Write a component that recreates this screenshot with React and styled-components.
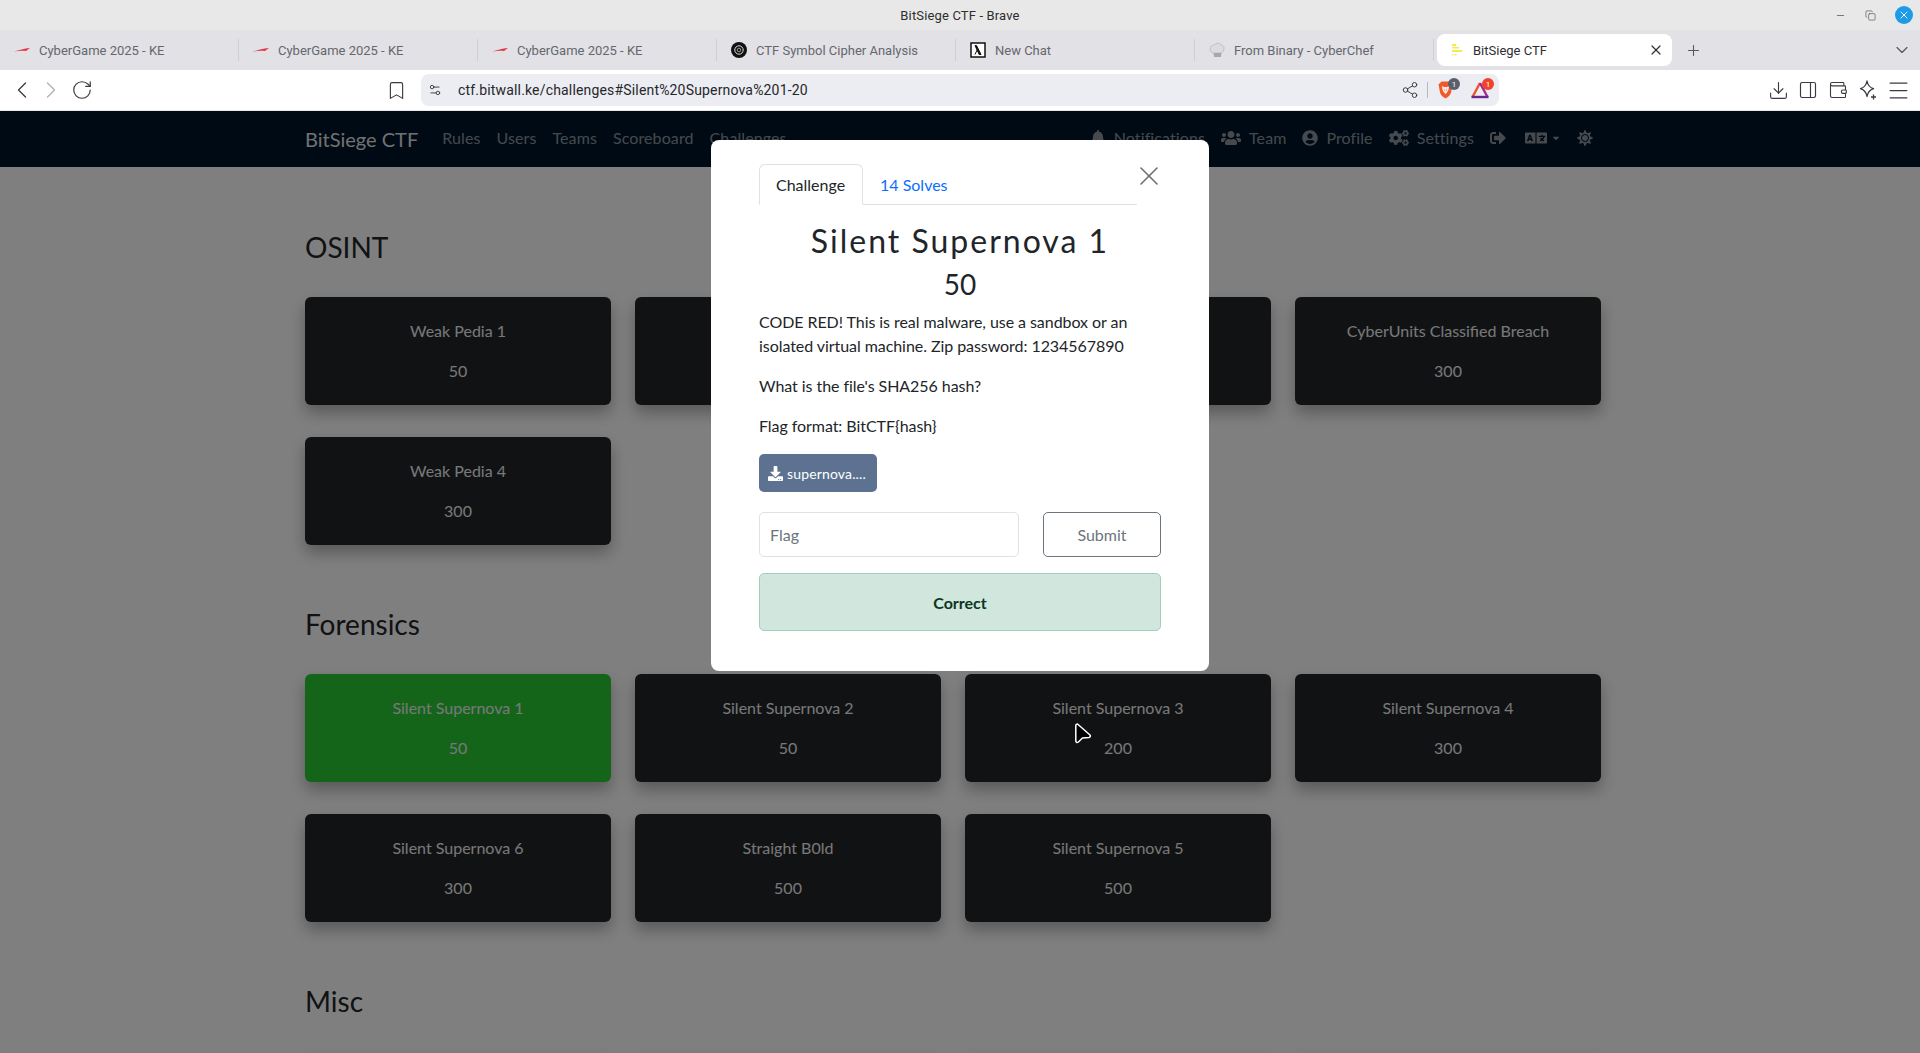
import React from "react"
import styled, { createGlobalStyle } from "styled-components"
import {
  ChevronLeft, ChevronRight, ChevronDown, RotateCw, Bookmark, Settings2, Share2,
  Download, PanelRight, Wallet, Menu, Plus, X, Minus, Copy,
} from "lucide-react"
import {
  FaBell, FaUsers, FaUserCircle, FaCogs, FaSignOutAlt, FaLanguage, FaSun, FaDownload, FaCaretDown,
} from "react-icons/fa"

const sections = [
  {
    name: "OSINT",
    rows: [
      [["Weak Pedia 1", 50], ["", 0], ["", 0], ["CyberUnits Classified Breach", 300]],
      [["Weak Pedia 4", 300]],
    ],
  },
  {
    name: "Forensics",
    rows: [
      [["Silent Supernova 1", 50, true], ["Silent Supernova 2", 50], ["Silent Supernova 3", 200], ["Silent Supernova 4", 300]],
      [["Silent Supernova 6", 300], ["Straight B0ld", 500], ["Silent Supernova 5", 500]],
    ],
  },
  {
    name: "Misc",
    rows: [[["", 0], ["", 0], ["", 0], ["", 0]]],
  },
]

const SwooshIcon = () => (
  <svg width="18" height="16" viewBox="0 0 18 16">
    <path d="M1 9.5 C6 8 11 6.5 17 6 L13 9 C9 8.4 5 9 1 9.5Z" fill="#e8343c" />
  </svg>
)

const KnotIcon = () => (
  <svg width="16" height="16" viewBox="0 0 16 16">
    <circle cx="8" cy="8" r="8" fill="#111" />
    <circle cx="8" cy="8" r="4.2" fill="none" stroke="#ddd" strokeWidth="1" />
    <circle cx="8" cy="8" r="1.8" fill="none" stroke="#999" strokeWidth="1" />
  </svg>
)

const LambdaIcon = () => (
  <svg width="16" height="16" viewBox="0 0 16 16">
    <rect x="1" y="1" width="14" height="14" fill="#fff" stroke="#111" strokeWidth="1.5" />
    <path d="M5 3.5 L6.5 3.5 L11 12.5 L9.2 12.5 Z M7.3 7.5 L5 12.5" fill="#111" stroke="#111" strokeWidth="1" />
  </svg>
)

const ChefIcon = () => (
  <svg width="16" height="16" viewBox="0 0 16 16">
    <path d="M4 11 C1.5 10.5 0.5 8 1.5 5.5 C2.5 3 4.5 3 5.5 3 C7 0.8 11 0.8 12 3 C14 3 15.5 4.5 15 7 C14.6 9 13.5 10.5 12.5 11 Z" fill="#dcdcdc" stroke="#b5b5b5" strokeWidth=".7" />
    <path d="M4.5 11 L12.2 11 L12 15 L5 15 Z" fill="#a8a8a8" />
  </svg>
)

const SiegeIcon = () => (
  <svg width="16" height="16" viewBox="0 0 16 16" fill="#f6e94a">
    <rect x="3" y="2" width="4" height="2" />
    <rect x="3" y="5" width="7" height="1.5" />
    <rect x="3" y="8" width="10" height="2" />
    <rect x="3" y="12" width="1.5" height="1.5" />
    <rect x="6" y="12" width="1.5" height="1.5" />
  </svg>
)

const BraveIcon = () => (
  <svg width="15" height="18" viewBox="0 0 15 18">
    <path d="M3.5 0.5 L11.5 0.5 L14.5 3.5 L13 11.5 C12.3 14.5 9.5 16.5 7.5 17.5 C5.5 16.5 2.7 14.5 2 11.5 L0.5 3.5 Z" fill="#f0592a" />
    <path d="M4 5 L6 6 L9 6 L11 5 L10.5 9 L8.7 12 L7.5 13 L6.3 12 L4.5 9 Z" fill="#fff" opacity=".85" />
    <path d="M6 8 L7 9 L6.5 10 Z M9 8 L8 9 L8.5 10 Z" fill="#f0592a" />
  </svg>
)

const RewardsIcon = () => (
  <svg width="18" height="18" viewBox="0 0 18 18">
    <path d="M9 2 L1.5 16" stroke="#f0512a" strokeWidth="2.4" fill="none" />
    <path d="M9 2 L16.5 16" stroke="#a82a8c" strokeWidth="2.4" fill="none" />
    <path d="M0.5 16 L17.5 16" stroke="#66288c" strokeWidth="2.4" fill="none" />
  </svg>
)

const StarPlusIcon = () => (
  <svg width="20" height="22" viewBox="0 0 20 22" fill="none" stroke="currentColor" strokeWidth="1.3" strokeLinejoin="round">
    <path d="M9 2 C9.8 6.5 11.5 8.5 15.5 9.7 C11.5 11 9.8 13 9 17.5 C8.2 13 6.5 11 2.5 9.7 C6.5 8.5 8.2 6.5 9 2Z" />
    <path d="M15.5 15.5 L15.5 20.5 M13 18 L18 18" />
  </svg>
)

const CursorIcon = () => (
  <svg width="20" height="24" viewBox="0 0 20 24">
    <path d="M4.5 2 Q2.8 2 2.8 4 L2.8 19 Q3.4 21.6 5.4 20 L9.4 16 L16 15.5 Q18.2 14.6 17 13 Z" fill="#000" stroke="#fff" strokeWidth="1.5" strokeLinejoin="round" />
  </svg>
)

const tabs = [
  { title: "CyberGame 2025 - KE", icon: <SwooshIcon />, wide: true },
  { title: "CyberGame 2025 - KE", icon: <SwooshIcon />, wide: true },
  { title: "CyberGame 2025 - KE", icon: <SwooshIcon />, wide: true },
  { title: "CTF Symbol Cipher Analysis", icon: <KnotIcon /> },
  { title: "New Chat", icon: <LambdaIcon /> },
  { title: "From Binary - CyberChef", icon: <ChefIcon /> },
]

const App = () => (
  <Screen>
    <GlobalStyle />
    <TitleBar>
      BitSiege CTF - Brave
      <WindowControls>
        <Minus size={11} strokeWidth={1.5} />
        <Copy size={11} strokeWidth={1.3} />
        <CloseDot><X size={12} strokeWidth={2} /></CloseDot>
      </WindowControls>
    </TitleBar>

    <TabStrip>
      {tabs.map((tab, i) => (
        <Tab key={i} $wide={tab.wide}>
          {tab.icon}
          <span>{tab.title}</span>
        </Tab>
      ))}
      <ActiveTab>
        <SiegeIcon />
        <span>BitSiege CTF</span>
        <TabClose><X size={16} strokeWidth={1.8} /></TabClose>
      </ActiveTab>
      <NewTab><Plus size={17} strokeWidth={1.5} /></NewTab>
      <TabMenu><ChevronDown size={20} strokeWidth={1.4} /></TabMenu>
    </TabStrip>

    <Toolbar>
      <NavButtons>
        <ChevronLeft size={28} strokeWidth={1.1} />
        <Faded><ChevronRight size={28} strokeWidth={1.1} /></Faded>
        <RotateCw size={22} strokeWidth={1.3} />
      </NavButtons>
      <BookmarkSlot><Bookmark size={21} strokeWidth={1.3} /></BookmarkSlot>
      <AddressBar>
        <Settings2 size={14} strokeWidth={1.6} />
        <Url>ctf.bitwall.ke/challenges#Silent%20Supernova%201-20</Url>
        <Share2 size={18} strokeWidth={1.3} />
        <Divider />
        <BraveSlot>
          <BraveIcon />
          <Badge $bg="#5a5f6b" $right={-7}>1</Badge>
        </BraveSlot>
        <RewardsSlot>
          <RewardsIcon />
          <Badge $bg="#f0432c" $right={-5}>1</Badge>
        </RewardsSlot>
      </AddressBar>
      <ToolIcons>
        <Download size={21} strokeWidth={1.3} />
        <PanelRight size={20} strokeWidth={1.4} />
        <Wallet size={20} strokeWidth={1.3} />
        <StarPlusIcon />
        <Menu size={25} strokeWidth={1.2} />
      </ToolIcons>
    </Toolbar>

    <Page>
      <Navbar>
        <Brand>BitSiege CTF</Brand>
        <NavLink>Rules</NavLink>
        <NavLink>Users</NavLink>
        <NavLink>Teams</NavLink>
        <NavLink>Scoreboard</NavLink>
        <NavLink>Challenges</NavLink>
        <NavRight>
          <NavLink><FaBell /> Notifications</NavLink>
          <NavLink $wide><FaUsers /> Team</NavLink>
          <NavLink><FaUserCircle /> Profile</NavLink>
          <NavLink $wide><FaCogs /> Settings</NavLink>
          <LogoutLink><FaSignOutAlt /></LogoutLink>
          <LanguageLink><LanguageIcon /><CaretIcon /></LanguageLink>
          <NavLink><FaSun /></NavLink>
        </NavRight>
      </Navbar>

      <Content>
        {sections.map(section => (
          <Section key={section.name}>
            <Heading>{section.name}</Heading>
            {section.rows.map((row, i) => (
              <CardRow key={i}>
                {row.map(([title, value, solved], j) => (
                  <Card key={j} $solved={solved}>
                    <CardTitle>{title}</CardTitle>
                    <CardValue>{value || ""}</CardValue>
                  </Card>
                ))}
              </CardRow>
            ))}
          </Section>
        ))}
      </Content>

      <Backdrop>
        <Modal>
          <CloseButton><X size={32} strokeWidth={1.2} /></CloseButton>
          <TabHeader>
            <ModalTabActive>Challenge</ModalTabActive>
            <ModalTab>14 Solves</ModalTab>
          </TabHeader>
          <ChallengeName>Silent Supernova 1</ChallengeName>
          <ChallengeValue>50</ChallengeValue>
          <Description>CODE RED! This is real malware, use a sandbox or an isolated virtual machine. Zip password: 1234567890</Description>
          <Description>What is the file's SHA256 hash?</Description>
          <Description>Flag format: BitCTF{"{hash}"}</Description>
          <FileButton><FaDownload size={15} /> supernova....</FileButton>
          <SubmitRow>
            <FlagInput placeholder="Flag" />
            <SubmitButton>Submit</SubmitButton>
          </SubmitRow>
          <Alert>Correct</Alert>
        </Modal>
      </Backdrop>

      <Cursor><CursorIcon /></Cursor>
    </Page>
  </Screen>
)

const GlobalStyle = createGlobalStyle`
  html, body {
    margin: 0;
    height: 100%;
    overflow: hidden;
  }
  * {
    box-sizing: border-box;
  }
`

const Screen = styled.div`
  display: flex;
  flex-direction: column;
  height: 1053px;
  width: 1920px;
  font-family: Roboto, sans-serif;
  background: #fff;
`

const TitleBar = styled.div`
  position: relative;
  display: flex;
  align-items: center;
  justify-content: center;
  height: 30px;
  background: #e8e8e8;
  color: #2e2e2e;
  font-size: 13px;
  letter-spacing: 0.15px;
`

const WindowControls = styled.div`
  position: absolute;
  right: 7px;
  top: 6px;
  display: flex;
  align-items: center;
  gap: 19px;
  color: #444;
`

const CloseDot = styled.div`
  display: flex;
  align-items: center;
  justify-content: center;
  width: 18px;
  height: 18px;
  border-radius: 50%;
  background: #1c9be6;
  color: #fff;
`

const TabStrip = styled.div`
  display: flex;
  align-items: center;
  height: 40px;
  background: #e1e1e6;
`

const Tab = styled.div`
  display: flex;
  align-items: center;
  gap: ${p => (p.$wide ? "8px" : "9px")};
  flex: none;
  width: 239px;
  height: 22px;
  padding-left: ${p => (p.$wide ? "13px" : "14px")};
  border-right: 1px solid #cfcfd4;
  color: #66676d;
  font-size: 13px;
  white-space: nowrap;
`

const ActiveTab = styled.div`
  display: flex;
  align-items: center;
  gap: 8px;
  width: 235px;
  height: 32px;
  margin-left: 3px;
  padding: 0 8px 0 12px;
  border-radius: 8px;
  background: #fff;
  color: #2e2e33;
  font-size: 13px;
`

const TabClose = styled.span`
  display: flex;
  margin-left: auto;
`

const NewTab = styled.div`
  display: flex;
  margin-left: 13px;
  color: #55565c;
`

const TabMenu = styled.div`
  display: flex;
  margin-left: auto;
  margin-right: 8px;
  color: #55565c;
`

const Toolbar = styled.div`
  display: flex;
  align-items: center;
  height: 41px;
  background: #fff;
  color: #3a3a40;
  border-bottom: 1px solid #e8e8e8;
`

const NavButtons = styled.div`
  display: flex;
  align-items: center;
  gap: 1px;
  width: 386px;
  padding-left: 8px;
`

const Faded = styled.span`
  display: flex;
  opacity: 0.4;
  margin-right: 5px;
`

const BookmarkSlot = styled.div`
  display: flex;
  width: 35px;
`

const AddressBar = styled.div`
  display: flex;
  align-items: center;
  width: 1078px;
  height: 32px;
  padding: 0 10px 0 7px;
  border-radius: 8px;
  background: #ecedf2;
`

const Url = styled.span`
  flex: 1;
  margin-left: 16px;
  color: #26262b;
  font-size: 14px;
  letter-spacing: 0.17px;
`

const Divider = styled.span`
  width: 1px;
  height: 16px;
  margin: 0 10px 0 8px;
  background: #b9b9c0;
`

const BraveSlot = styled.span`
  position: relative;
  display: flex;
  margin-right: 18px;
`

const RewardsSlot = styled.span`
  position: relative;
  display: flex;
`

const Badge = styled.span`
  position: absolute;
  top: -3px;
  right: ${p => p.$right}px;
  display: flex;
  align-items: center;
  justify-content: center;
  width: 12px;
  height: 12px;
  border-radius: 50%;
  background: ${p => p.$bg};
  color: #fff;
  font-size: 8px;
`

const ToolIcons = styled.div`
  display: grid;
  grid-template-columns: repeat(5, 30px);
  justify-items: center;
  align-items: center;
  margin-left: auto;
  margin-right: 7px;
`

const Page = styled.div`
  position: relative;
  flex: 1;
  overflow: hidden;
  background: #fff;
  color: #212529;
  font-family: Lato, sans-serif;
  font-size: 16px;
`

const Navbar = styled.nav`
  display: flex;
  align-items: center;
  height: 56px;
  padding: 0 319px 1px 305px;
  background: #001428;
`

const Brand = styled.span`
  margin-right: 16px;
  color: rgba(255, 255, 255, 0.9);
  font-size: 20px;
`

const NavLink = styled.span`
  display: inline-flex;
  align-items: center;
  gap: 8px;
  padding: 0 8px 2px;
  color: rgba(255, 255, 255, 0.55);
  letter-spacing: 0.1px;
  white-space: nowrap;

  svg {
    width: ${p => (p.$wide ? "20px" : "16px")};
    height: 16px;
  }
`

const LogoutLink = styled(NavLink)`
  padding-right: 11px;
`

const LanguageLink = styled(NavLink)`
  gap: 4px;
`

const LanguageIcon = styled(FaLanguage)`
  && {
    width: 22px;
    height: 18px;
  }
`

const CaretIcon = styled(FaCaretDown)`
  && {
    width: 10px;
    height: 10px;
  }
`

const NavRight = styled.div`
  display: flex;
  align-items: center;
  margin-left: auto;
`

const Content = styled.main`
  display: flex;
  flex-direction: column;
  gap: 62px;
  padding: 63px 319px 0 305px;
`

const Section = styled.section`
  display: flex;
  flex-direction: column;
  gap: 32px;

  &:last-child h3 {
    margin-bottom: 4px;
  }
`

const Heading = styled.h3`
  margin: 0 0 1px;
  height: 34px;
  font-size: 28px;
  font-weight: 400;
  line-height: 34px;
`

const CardRow = styled.div`
  display: grid;
  grid-template-columns: repeat(4, 306px);
  gap: 24px;
`

const Card = styled.div`
  display: flex;
  flex-direction: column;
  align-items: center;
  gap: 16px;
  height: 108px;
  padding-top: 22px;
  border-radius: 6px;
  background: ${p => (p.$solved ? "#29cb35" : "#212529")};
  color: #f0f0f0;
  box-shadow: 0 8px 16px rgba(0, 0, 0, 0.3);
`

const CardTitle = styled.div`
  line-height: 24px;
`

const CardValue = styled.div`
  line-height: 24px;
`

const Backdrop = styled.div`
  position: absolute;
  inset: 0;
  display: flex;
  justify-content: center;
  align-items: flex-start;
  padding-top: 29px;
  background: rgba(0, 0, 0, 0.5);
`

const Modal = styled.div`
  position: relative;
  width: 498px;
  height: 531px;
  padding: 24px 48px 0;
  border-radius: 8px;
  background: #fff;
`

const CloseButton = styled.div`
  position: absolute;
  top: 20px;
  right: 44px;
  display: flex;
  color: #6e6e6e;
`

const TabHeader = styled.div`
  display: flex;
  width: 378px;
  height: 41px;
  border-bottom: 1px solid #dee2e6;
`

const ModalTabActive = styled.div`
  width: 104px;
  height: 41px;
  padding: 8px 16px;
  border: 1px solid #dee2e6;
  border-bottom-color: #fff;
  border-radius: 6px 6px 0 0;
  background: #fff;
  line-height: 24px;
`

const ModalTab = styled.div`
  padding: 9px 17px;
  color: #0d6efd;
  line-height: 24px;
`

const ChallengeName = styled.h3`
  margin: 16px 0 0;
  font-size: 32px;
  font-weight: 400;
  letter-spacing: 2px;
  line-height: 40px;
  text-align: center;
`

const ChallengeValue = styled.h4`
  margin: 3px 0 6px;
  font-size: 28px;
  font-weight: 400;
  line-height: 40px;
  text-align: center;
`

const Description = styled.p`
  margin: 0 0 16px;
  line-height: 24px;
  letter-spacing: -0.06px;
`

const FileButton = styled.div`
  display: flex;
  align-items: center;
  gap: 4px;
  width: 118px;
  height: 38px;
  margin-top: 4px;
  padding-left: 9px;
  border-radius: 5px;
  background: #5c7290;
  color: #fff;
  font-size: 14px;
  letter-spacing: 0.15px;
`

const SubmitRow = styled.div`
  display: flex;
  justify-content: space-between;
  margin-top: 20px;
`

const FlagInput = styled.input`
  width: 260px;
  height: 45px;
  padding: 0 10px;
  border: 1px solid #dee2e6;
  border-radius: 5px;
  font: inherit;
  &::placeholder {
    color: #6c757d;
  }
`

const SubmitButton = styled.div`
  display: flex;
  align-items: center;
  justify-content: center;
  width: 118px;
  height: 45px;
  border: 1px solid #6c757d;
  border-radius: 5px;
  color: #6c757d;
`

const Alert = styled.div`
  display: flex;
  align-items: center;
  justify-content: center;
  height: 58px;
  margin-top: 16px;
  border: 1px solid #a3cfbb;
  border-radius: 5px;
  background: #d1e7dd;
  color: #0a3622;
  font-weight: 700;
`

const Cursor = styled.div`
  position: absolute;
  left: 1073px;
  top: 611px;
  display: flex;
`

export default App
